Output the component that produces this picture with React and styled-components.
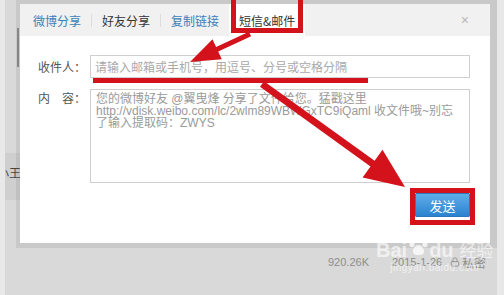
import React from 'react';
import styled, { createGlobalStyle } from 'styled-components';
import { Lock } from 'lucide-react';

const Global = createGlobalStyle`
  html, body { margin: 0; padding: 0; }
  body {
    width: 504px; height: 295px; overflow: hidden; background: #d9d9d9;
    font-family: "Noto Sans CJK SC", "Liberation Sans", sans-serif;
  }
`;

const Page = styled.div`
  position: relative;
  width: 504px;
  height: 295px;
  display: flex;
  overflow: hidden;
  background: #d9d9d9;
`;

const Edge = styled.div`
  flex: none;
  width: ${p => p.$w}px;
  background: ${p => p.$bg};
`;

const Backdrop = styled.div`
  flex: 1;
  display: flex;
  flex-direction: column;
  overflow: hidden;
  color: #8a8a8a;
  font-size: 12px;
`;

const SideMark = styled.div`
  margin: 28px 0 0 12px;
  width: 2px;
  height: 39px;
  background: #8c8c8c;
`;

const ListRow = styled.div`
  margin-top: 86px;
  width: 60px;
  height: 47px;
  background: #cfcfcf;
  display: flex;
  align-items: center;
  padding-bottom: 8px;
  box-sizing: border-box;
  color: #444;
  overflow: hidden;
`;

const RowName = styled.span`
  margin-left: -8px;
  font-size: 12px;
`;

const FileRow = styled.div`
  margin-top: 52px;
  height: 20px;
  display: flex;
  align-items: center;
  padding-left: 323px;
  font-family: "Liberation Sans", "Noto Sans CJK SC", sans-serif;
  font-size: 11px;
  color: #8d8d8d;
`;

const Cell = styled.span`
  width: ${p => p.$w}px;
  flex: none;
  white-space: nowrap;
  display: flex;
  align-items: center;
  gap: 2px;
`;

const CjkText = styled.span`
  font-family: "Noto Sans CJK SC", sans-serif;
  font-size: 12px;
`;

const Modal = styled.div`
  position: absolute;
  left: 16px;
  top: 0;
  border-style: solid;
  border-color: rgba(90, 90, 90, 0.12);
  border-width: 4px 7px 5px 4px;
`;

const Dialog = styled.div`
  width: 470px;
  height: 239px;
  background: #fff;
  display: flex;
  flex-direction: column;
`;

const Header = styled.div`
  height: 32px;
  flex: none;
  background: #f1f1f1;
  display: flex;
  align-items: stretch;
  padding-left: 3px;
`;

const Tab = styled.div`
  display: flex;
  align-items: center;
  padding: 0 10px;
  font-size: 12px;
  color: ${p => (p.$link ? '#3d7fb8' : '#333')};
  background: ${p => (p.$active ? '#fff' : 'transparent')};
  white-space: nowrap;
`;

const TabDivider = styled.span`
  width: 1px;
  height: 13px;
  align-self: center;
  background: #dcdcdc;
`;

const Close = styled.span`
  margin-left: auto;
  margin-right: 21px;
  align-self: center;
  color: #b8b8b8;
  font-size: 14px;
  font-family: "Liberation Sans", sans-serif;
  line-height: 1;
`;

const Body = styled.div`
  display: grid;
  grid-template-columns: 52px 1fr;
  row-gap: 11px;
  padding: 19px 20px 0 18px;
`;

const Label = styled.label`
  font-size: 12px;
  color: #555;
  line-height: ${p => p.$lh}px;
  white-space: pre;
`;

const TextInput = styled.input`
  box-sizing: border-box;
  width: 380px;
  height: 23px;
  margin: 0;
  border: 1px solid #cfcfcf;
  padding: 0 4px;
  font-family: "Noto Sans CJK SC", "Liberation Sans", sans-serif;
  font-size: 12px;
  outline: none;
  &::placeholder { color: #a9a9a9; }
`;

const TextArea = styled.textarea`
  box-sizing: border-box;
  width: 380px;
  height: 94px;
  margin: 0;
  border: 1px solid #cfcfcf;
  padding: 3px 5px;
  font-family: "Liberation Sans", "Noto Sans CJK SC", sans-serif;
  font-size: 12px;
  line-height: 12px;
  color: #9a9a9a;
  resize: none;
  outline: none;
  overflow: hidden;
  white-space: pre;
`;

const Footer = styled.div`
  display: flex;
  justify-content: flex-end;
  padding: 10px 20px 0 0;
`;

const SendButton = styled.button`
  width: 55px;
  height: 24px;
  border: 1px solid #2c78bd;
  border-radius: 1px;
  background: linear-gradient(#5eaeea, #2c82cf);
  color: #fff;
  font-family: "Noto Sans CJK SC", sans-serif;
  font-size: 13px;
  padding: 0;
`;

const Overlay = styled.svg`
  position: absolute;
  left: 0;
  top: 0;
  pointer-events: none;
`;

const Watermark = styled.div`
  position: absolute;
  left: 376px;
  top: 238px;
  display: flex;
  flex-direction: column;
  align-items: center;
  color: rgba(255, 255, 255, 0.65);
  pointer-events: none;
`;

const MarkLine = styled.div`
  display: flex;
  align-items: center;
  font-family: "Liberation Sans", sans-serif;
  font-weight: bold;
  font-size: 20px;
  line-height: 24px;
`;

const MarkCjk = styled.span`
  font-family: "Noto Sans CJK SC", sans-serif;
  font-weight: normal;
  font-size: 17px;
  margin-left: 6px;
`;

const MarkUrl = styled.div`
  font-family: "Liberation Sans", sans-serif;
  font-size: 10px;
  letter-spacing: 0.5px;
`;

const arrow = (x1, y1, x2, y2, sw, hl, hw) => {
  const dx = x2 - x1, dy = y2 - y1;
  const len = Math.hypot(dx, dy);
  const ux = dx / len, uy = dy / len;
  const nx = -uy, ny = ux;
  const bx = x2 - ux * hl, by = y2 - uy * hl;
  const p = (x, y) => `${x.toFixed(1)},${y.toFixed(1)}`;
  return [
    p(x1 + nx * sw / 2, y1 + ny * sw / 2),
    p(bx + nx * sw / 2, by + ny * sw / 2),
    p(bx + nx * hw / 2, by + ny * hw / 2),
    p(x2, y2),
    p(bx - nx * hw / 2, by - ny * hw / 2),
    p(bx - nx * sw / 2, by - ny * sw / 2),
    p(x1 - nx * sw / 2, y1 - ny * sw / 2),
  ].join(' ');
};

const RED = '#d3121b';

const Paw = () => (
  <svg width="22" height="22" viewBox="0 0 22 22" style={{ margin: '-8px 0 0 0' }}>
    <g fill="rgba(255,255,255,0.75)">
      <ellipse cx="5" cy="9" rx="2.6" ry="3.2" />
      <ellipse cx="9" cy="4.5" rx="2.6" ry="3.2" />
      <ellipse cx="14" cy="4.5" rx="2.6" ry="3.2" />
      <ellipse cx="18" cy="9" rx="2.6" ry="3.2" />
      <path d="M11.5 10 C7 10 5 16 6.5 18.5 C8 20.5 15 20.5 16.5 18.5 C18 16 16 10 11.5 10 Z" />
    </g>
  </svg>
);

const message =
  '您的微博好友 @翼曳烽 分享了文件给您。猛戳这里\nhttp://vdisk.weibo.com/lc/2wlm89WBWGxTC9iQaml 收文件哦~别忘\n了输入提取码：ZWYS';

export default function App() {
  return (
    <>
      <Global />
      <Page>
        <Edge $w={5} $bg="#e9e9e9" />
        <Backdrop>
          <SideMark />
          <ListRow>
            <RowName>小王</RowName>
          </ListRow>
          <FileRow>
            <Cell $w={64}>920.26K</Cell>
            <Cell $w={58}>2015-1-26</Cell>
            <Cell $w={40}>
              <Lock size={10} strokeWidth={2} />
              <CjkText>私密</CjkText>
            </Cell>
          </FileRow>
        </Backdrop>
        <Edge $w={7} $bg="#e8e8e8" />

        <Modal>
          <Dialog>
            <Header>
              <Tab $link>微博分享</Tab>
              <TabDivider />
              <Tab>好友分享</Tab>
              <TabDivider />
              <Tab $link>复制链接</Tab>
              <Tab $active>短信&amp;邮件</Tab>
              <Close>×</Close>
            </Header>
            <Body>
              <Label $lh={23}>收件人：</Label>
              <TextInput placeholder="请输入邮箱或手机号，用逗号、分号或空格分隔" />
              <Label $lh={18}>{'内\u2003容：'}</Label>
              <TextArea defaultValue={message} />
            </Body>
            <Footer>
              <SendButton>发送</SendButton>
            </Footer>
          </Dialog>
        </Modal>

        <Watermark>
          <MarkLine>
            Bai<Paw />du<MarkCjk>经验</MarkCjk>
          </MarkLine>
          <MarkUrl>jingyan.baidu.com</MarkUrl>
        </Watermark>

        <Overlay width="504" height="295" viewBox="0 0 504 295">
          <rect x="233.5" y="-4" width="67" height="34.5" fill="none" stroke={RED} strokeWidth="5" />
          <rect x="412.5" y="190.5" width="60" height="32" fill="none" stroke={RED} strokeWidth="5" />
          <line x1="93" y1="80.5" x2="368" y2="80.5" stroke={RED} strokeWidth="5" />
          <polygon points={arrow(250, 34, 190, 62, 5, 30, 22)} fill={RED} />
          <polygon points={arrow(262, 84, 405, 187, 7, 40, 34)} fill={RED} />
        </Overlay>
      </Page>
    </>
  );
}
